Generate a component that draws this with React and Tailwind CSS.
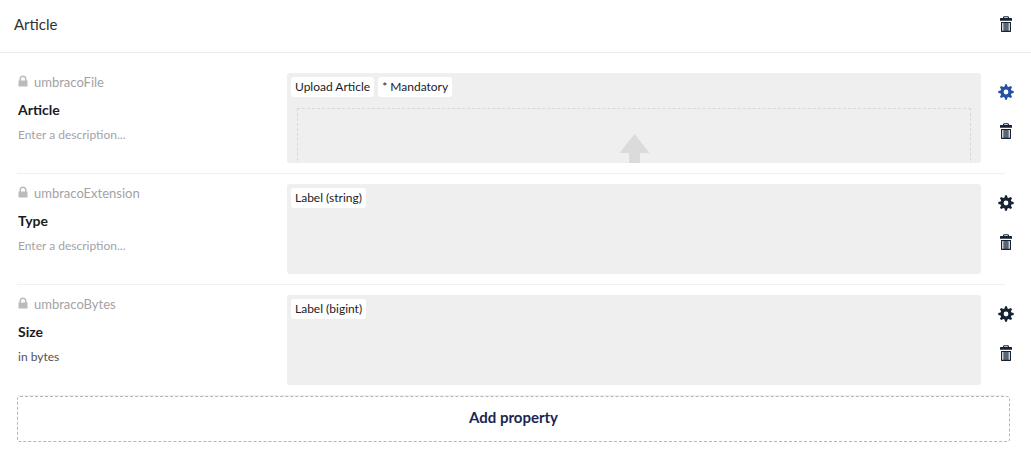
const properties = [
  {
    alias: "umbracoFile",
    name: "Article",
    description: "",
    tags: ["Upload Article", "* Mandatory"],
    upload: true,
    active: true,
  },
  { alias: "umbracoExtension", name: "Type", description: "", tags: ["Label (string)"] },
  { alias: "umbracoBytes", name: "Size", description: "in bytes", tags: ["Label (bigint)"] },
];

function TrashIcon() {
  return (
    <svg viewBox="0 0 12 16" className="h-4 w-3" fill="currentColor" aria-hidden="true">
      <path d="M3 2V1l1-0.700h4L9 1v1h2.500l0.500 0.500V4.700H0V2.500L0.500 2zM4.200 1.300V2h3.600V1.300z" fillRule="evenodd" />
      <path d="M1 6h10v9.500l-0.500 0.500h-9L1 15.500zM2.200 7v7.800h1.300V7zM8.500 7v7.800h1.300V7z" fillRule="evenodd" />
      <path d="M4.500 7h1v7.800h-1zM6.500 7h1v7.800h-1z" fill="#fff" fillOpacity="0.6" />
    </svg>
  );
}

function GearIcon() {
  return (
    <svg viewBox="0 0 16 16" className="size-4" fill="currentColor" aria-hidden="true">
      <path
        fillRule="evenodd"
        d="M7.100 0.300h1.800l0.600 2.300 1.200 0.500 2.100-1.200 1.300 1.300-1.200 2.100 0.500 1.200 2.300 0.600v1.800l-2.300 0.600-0.500 1.200 1.200 2.100-1.300 1.300-2.100-1.200-1.200 0.500-0.600 2.300H7.100l-0.600-2.300-1.200-0.500-2.100 1.200-1.300-1.300 1.200-2.100-0.500-1.200-2.300-0.600V7.100l2.300-0.600 0.500-1.200-1.200-2.100 1.300-1.300 2.100 1.200 1.200-0.500zM8 5.600a2.400 2.400 0 1 0 0 4.800a2.400 2.400 0 1 0 0-4.800z"
      />
    </svg>
  );
}

function LockIcon() {
  return (
    <svg viewBox="0 0 10 12" className="h-3 w-2.5" fill="currentColor" aria-hidden="true">
      <path d="M0.500 5.500h1V4a3.500 3.500 0 0 1 7 0v1.500h1V11.500h-9zM3 5.500h4V4a2 2 0 0 0-4 0z" fillRule="evenodd" />
    </svg>
  );
}

function UploadArea() {
  return (
    <div className="mx-1.5 mt-[11px] flex h-28 justify-center border border-dashed border-[#d8d8d8] pt-[25px]">
      <svg viewBox="0 0 30 40" className="h-10 w-8" fill="#dbdbdb" aria-hidden="true">
        <path d="M15.500 0l15 19H21V40H10V19H0.500z" />
      </svg>
    </div>
  );
}

function PropertyRow({ alias, name, description, tags, upload, active }) {
  return (
    <li>
      <div className="flex py-2.5">
        <div className="w-[270px] shrink-0 pl-px pr-4">
          <div className="flex h-5 items-center gap-1.5 text-[13px] text-[#a3a2a7]">
            <span className="pb-1 text-[#bbbabf]">
              <LockIcon />
            </span>
            {alias}
          </div>
          <input
            aria-label={`${alias} name`}
            defaultValue={name}
            className="mt-[5px] block h-[22px] w-full bg-transparent text-sm font-bold text-[#1b1b1f] outline-none"
          />
          <input
            aria-label={`${alias} description`}
            defaultValue={description}
            placeholder="Enter a description..."
            className="mt-1 block h-5 w-full bg-transparent text-xs text-[#515054] outline-none placeholder:text-[#a3a2a7]"
          />
        </div>
        <div className="h-[90px] min-w-0 flex-1 overflow-hidden rounded-[3px] bg-[#efefef] p-1">
          <div className="flex gap-1">
            {tags.map((tag) => (
              <span key={tag} className="h-5 rounded-[3px] bg-white px-1 text-xs leading-5 text-[#1b1b1f]">
                {tag}
              </span>
            ))}
          </div>
          {upload && <UploadArea />}
        </div>
        <div className="flex w-[50px] shrink-0 flex-col items-center gap-[23px] pt-[11px] text-[#162335]">
          <button type="button" aria-label={`${name} settings`} className={active ? "text-[#2152a3]" : ""}>
            <GearIcon />
          </button>
          <button type="button" aria-label={`Delete ${name}`}>
            <TrashIcon />
          </button>
        </div>
      </div>
      <hr className="mr-[26px] border-[#f0f0f2]" />
    </li>
  );
}

export default function App() {
  return (
    <section className="bg-white font-['Lato',sans-serif]">
      <header className="flex h-[53px] items-center justify-between border-b border-[#e9e9eb] px-3.5 pb-1">
        <input
          aria-label="Group name"
          defaultValue="Article"
          className="min-w-0 flex-1 bg-transparent text-[15px] text-[#303033] outline-none"
        />
        <button type="button" aria-label="Delete group" className="mr-[5px] text-[#162335]">
          <TrashIcon />
        </button>
      </header>
      <div className="pb-4 pl-[17px] pt-2.5">
        <ul>
          {properties.map((property) => (
            <PropertyRow key={property.alias} {...property} />
          ))}
        </ul>
        <div className="pr-[21px]">
          <button
            type="button"
            className="h-[46px] w-full rounded-[3px] border border-dashed border-[#b5b5b8] pb-[3px] text-[15px] font-bold text-[#1b264f]"
          >
            Add property
          </button>
        </div>
      </div>
    </section>
  );
}
